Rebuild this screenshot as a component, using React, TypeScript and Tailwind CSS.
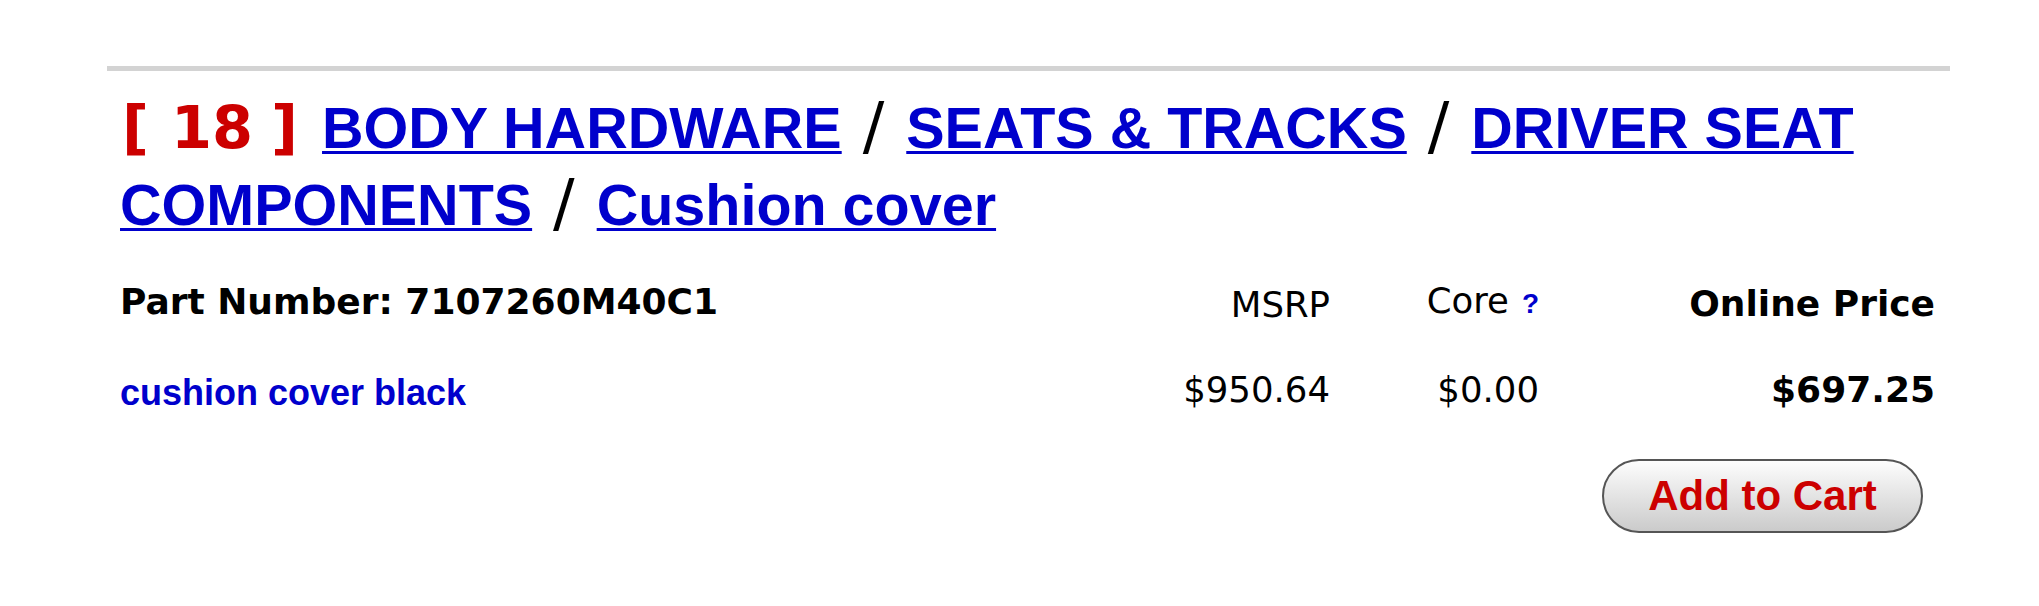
import React from "react";

function Sep() {
  return (
    <span className="ml-[21px] mr-[22px] font-['DejaVu_Sans',sans-serif] font-normal text-[64px] leading-none text-black">
      /
    </span>
  );
}

function Crumb({ children }: { children: React.ReactNode }) {
  return (
    <a
      href="#"
      className="text-[#0000cc] underline decoration-[3px] underline-offset-[3px]"
    >
      {children}
    </a>
  );
}

export default function App() {
  return (
    <div className="min-h-[606px] w-full bg-white pt-[66px]">
      <div className="ml-[107px] w-[1843px]">
        <div className="h-[5px] bg-[#d3d3d3]" />
        <div className="pl-[13px] pr-[15px]">
          <h1 className="mt-[19px] font-['Liberation_Sans',Arial,sans-serif] text-[57.5px] font-bold leading-[77px] text-black">
            <span className="ml-[2px] mr-[8px] font-['DejaVu_Sans',Verdana,sans-serif] text-[59px] leading-none text-[#cc0000]">
              [<span className="ml-[22px]">18</span>
              <span className="ml-[18px]">]</span>
            </span>{" "}
            <Crumb>BODY HARDWARE</Crumb>
            <Sep />
            <Crumb>SEATS &amp; TRACKS</Crumb>
            <Sep />
            <Crumb>DRIVER SEAT COMPONENTS</Crumb>
            <Sep />
            <Crumb>Cushion cover</Crumb>
          </h1>

          <div className="mt-[36px] grid h-[90px] grid-cols-[1fr_180px_209px_396px] items-start">
            <div className="pt-[4px] font-['DejaVu_Sans',Verdana,sans-serif] text-[36px] font-bold leading-none text-black">
              Part Number: 7107260M40C1
            </div>
            <div className="pt-[7px] text-right font-['DejaVu_Sans',Verdana,sans-serif] text-[35.5px] leading-none text-black">
              MSRP
            </div>
            <div className="pt-[3px] text-right font-['DejaVu_Sans',Verdana,sans-serif] text-[35.5px] leading-none text-black">
              Core
              <a
                href="#"
                className="ml-[13px] font-['Liberation_Sans',Arial,sans-serif] text-[28px] font-bold leading-none text-[#0000cc]"
              >
                ?
              </a>
            </div>
            <div className="pt-[6px] text-right font-['DejaVu_Sans',Verdana,sans-serif] text-[36px] font-bold leading-none text-black">
              Online Price
            </div>
          </div>

          <div className="grid h-[89px] grid-cols-[1fr_180px_209px_396px] items-start">
            <div className="pt-[5px] font-['Liberation_Sans',Arial,sans-serif] text-[36px] font-bold leading-none">
              <a href="#" className="text-[#0000cc]">
                cushion cover black
              </a>
            </div>
            <div className="pt-[2px] text-right font-['DejaVu_Sans',Verdana,sans-serif] text-[35.5px] leading-none text-black">
              $950.64
            </div>
            <div className="pt-[2px] text-right font-['DejaVu_Sans',Verdana,sans-serif] text-[35.5px] leading-none text-black">
              $0.00
            </div>
            <div className="pt-[2px] text-right font-['DejaVu_Sans',Verdana,sans-serif] text-[36px] font-bold leading-none text-black">
              $697.25
            </div>
          </div>

          <div className="flex justify-end">
            <button
              type="button"
              className="mr-[12px] flex h-[74px] w-[321px] items-center justify-center rounded-full border-2 border-[#555555] bg-linear-to-b from-[#fdfdfd] to-[#cbcbcb] font-['Liberation_Sans',Arial,sans-serif] text-[42px] font-bold leading-none text-[#cc0000]"
            >
              Add to Cart
            </button>
          </div>
        </div>
      </div>
    </div>
  );
}
